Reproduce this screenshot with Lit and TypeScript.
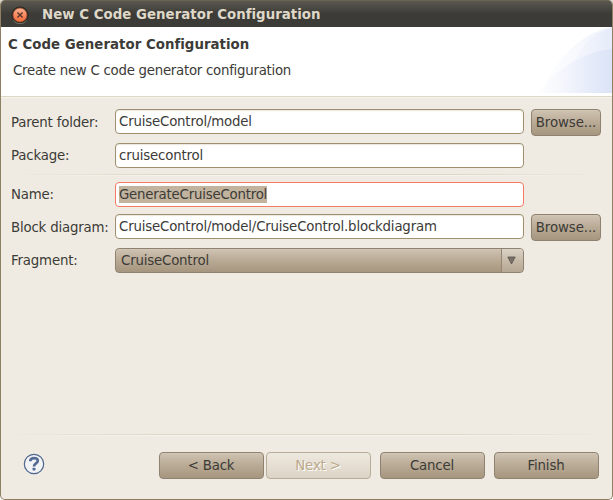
import { LitElement, html, css, svg } from "lit";
import { customElement } from "lit/decorators.js";

@customElement("app-root")
export class AppRoot extends LitElement {
  static styles = css`
    :host {
      display: block;
      width: 613px;
      height: 500px;
      overflow: hidden;
      background: linear-gradient(#d9d5cc 0 50%, #fff 50%);
      font: 13.33px/16px "DejaVu Sans", sans-serif;
      letter-spacing: -0.18px;
      color: #3c3b37;
    }
    * { box-sizing: border-box; }
    .window {
      display: flex;
      flex-direction: column;
      width: 613px;
      height: 500px;
      border: 1px solid #8f8063;
      border-top: 0;
      border-radius: 5px;
      overflow: hidden;
      background: #efebe2;
    }
    .titlebar {
      display: flex;
      align-items: center;
      height: 27px;
      flex: none;
      padding: 1px 0 0 10px;
      gap: 13px;
      border-top: 1px solid #6c6452;
      background: linear-gradient(#5b5850, #3c3b37 50%);
      color: #dfd8c8;
      font-weight: bold;
      letter-spacing: 0.03px;
    }
    .titlebar svg { display: block; flex: none; }
    .header {
      display: flex;
      justify-content: space-between;
      height: 69px;
      flex: none;
      background: #fff;
    }
    .heading { padding: 10px 0 0 7px; white-space: nowrap; }
    .heading b { display: block; letter-spacing: 0.03px; }
    .heading span { display: block; padding: 10px 0 0 5px; letter-spacing: -0.26px; }
    .rule {
      height: 2px;
      flex: none;
      background: linear-gradient(#dfd7c6 50%, #f6f3ec 50%);
    }
    .rule.fade {
      -webkit-mask-image: linear-gradient(90deg, transparent, #000 25% 75%, transparent);
      mask-image: linear-gradient(90deg, transparent, #000 25% 75%, transparent);
    }
    .form {
      display: flex;
      flex-direction: column;
      padding: 11px 11px 0 10px;
      flex: 1;
    }
    .row { display: flex; height: 25px; flex: none; white-space: nowrap; }
    .row + .row { margin-top: 9px; }
    .row.tight { margin-top: 7px; }
    .label { width: 104px; padding-top: 5px; flex: none; }
    .label.low { padding-top: 6px; }
    .form .rule { margin: 6px 0 6px; }
    .field {
      width: 409px;
      height: 25px;
      flex: none;
      padding: 4px 3px 0;
      border: 1px solid #a0906f;
      border-radius: 4px;
      background: #fff;
      box-shadow: inset 0 1px 1px #ebe7df;
    }
    .field.focus { padding-top: 3px; border-color: #f67963; box-shadow: none; }
    .selected { display: inline-block; height: 17px; padding-top: 1px; background: #c1b39e; letter-spacing: -0.21px; }
    .button {
      display: flex;
      justify-content: center;
      width: 105px;
      height: 27px;
      flex: none;
      padding: 5px 1px 0 0;
      border: 1px solid #8f8270;
      border-radius: 4px;
      background: linear-gradient(#cfc3b2, #b9aa95 50%, #a6967f);
      box-shadow: inset 0 1px #d8cdbd66;
    }
    .browse { width: 70px; margin-left: 7px; padding-right: 0; letter-spacing: -0.1px; }
    .combo {
      display: flex;
      width: 409px;
      height: 25px;
      padding-left: 5px;
      border: 1px solid #8f8270;
      border-radius: 4px;
      background: linear-gradient(#cfc3b2, #b9aa95 50%, #a6967f);
      box-shadow: inset 0 1px #d8cdbd66;
    }
    .combo span { flex: 1; padding-top: 4px; }
    .arrow {
      display: flex;
      width: 22px;
      border-left: 1px solid #958772;
      border-radius: 0 3px 3px 0;
      background: linear-gradient(#dbd3c7, #c7baa8 50%, #b5a792);
      padding-right: 2px;
      justify-content: center;
      align-items: center;
    }
    .footer { display: flex; padding: 16px 13px 0 22px; height: 63px; flex: none; }
    .help { width: 22px; height: 22px; margin: 1px 114px 0 0; flex: none; }
    .footer .disabled {
      margin: 0 9px 0 2px;
      border-color: #b8ab97;
      background: linear-gradient(#eee9e0, #dcd3c5);
      color: #bba98c;
      text-shadow: 1px 1px #fff;
      box-shadow: none;
    }
    .finish { margin-left: 9px; }
    .bottom { padding: 0 6px; flex: none; }
  `;

  private field(label: string, value: string, browse = false, tight = false) {
    return html`<div class="row ${tight ? "tight" : ""}">
      <div class="label ${browse ? "low" : ""}">${label}</div>
      <div class="field">${value}</div>
      ${browse ? html`<div class="button browse">Browse...</div>` : ""}
    </div>`;
  }

  private closeIcon = svg`
    <circle cx="9" cy="9" r="8.5" fill="#2b2a27"/>
    <path d="M2.5 14.5a8.2 8.2 0 0 0 13 0" fill="none" stroke="#77746c"/>
    <circle cx="9" cy="9" r="7" fill="url(#orb)" stroke="#9b4524" stroke-width=".7"/>
    <path d="M6.4 6.4l5.2 5.2M11.6 6.4l-5.2 5.2" stroke="#58382b" stroke-width="1.4"/>`;

  render() {
    return html`<div class="window">
      <div class="titlebar">
        <svg width="18" height="18" viewBox="0 0 18 18">
          <defs><linearGradient id="orb" x2="0" y2="1"><stop stop-color="#fbb498"/><stop offset=".5" stop-color="#f78a60"/><stop offset="1" stop-color="#f26a36"/></linearGradient></defs>
          ${this.closeIcon}
        </svg>
        <span>New C Code Generator Configuration</span>
      </div>
      <div class="header">
        <div class="heading"><b>C Code Generator Configuration</b><span>Create new C code generator configuration</span></div>
        <svg width="75" height="66" viewBox="0 0 75 66">
          <defs><linearGradient id="wash"><stop stop-color="#d9e1f6" stop-opacity="0.06"/><stop offset="1" stop-color="#cdd8f4"/></linearGradient></defs>
          <path d="M4 66C14 40 40 6 75 0V66Z" fill="url(#wash)" opacity=".35"/>
          <path d="M26 66C34 34 47 8 75 1V66Z" fill="url(#wash)" opacity=".25"/>
          <path d="M0 66C20 43 43 25 75 22V66Z" fill="url(#wash)" opacity=".4"/>
        </svg>
      </div>
      <div class="rule"></div>
      <div class="form">
        ${this.field("Parent folder:", "CruiseControl/model", true)}
        ${this.field("Package:", "cruisecontrol")}
        <div class="rule fade"></div>
        <div class="row">
          <div class="label">Name:</div>
          <div class="field focus"><span class="selected">GenerateCruiseControl</span></div>
        </div>
        ${this.field("Block diagram:", "CruiseControl/model/CruiseControl.blockdiagram", true, true)}
        <div class="row">
          <div class="label">Fragment:</div>
          <div class="combo"><span>CruiseControl</span>
            <div class="arrow"><svg width="9" height="9" viewBox="0 0 9 9"><path d="M.8 1h7.4L4.5 8z" fill="#77716a" stroke="#5b554c" stroke-width=".8"/></svg></div>
          </div>
        </div>
      </div>
      <div class="bottom"><div class="rule fade"></div></div>
      <div class="footer">
        <svg class="help" viewBox="0 0 22 22">
          <circle cx="11" cy="11" r="9.7" fill="#f2f3f4" stroke="#4f668e" stroke-width="1.2"/>
          <path d="M7.2 8.2C7.4 4.2 14.8 4.1 14.8 7.8C14.8 10.5 11 10.4 11 13.4" fill="none" stroke="#566b93" stroke-width="2.7"/>
          <rect x="9.5" y="14.8" width="3" height="2.7" rx=".8" fill="#566b93"/>
        </svg>
        <div class="button">&lt; Back</div>
        <div class="button disabled">Next &gt;</div>
        <div class="button">Cancel</div>
        <div class="button finish">Finish</div>
      </div>
    </div>`;
  }
}
